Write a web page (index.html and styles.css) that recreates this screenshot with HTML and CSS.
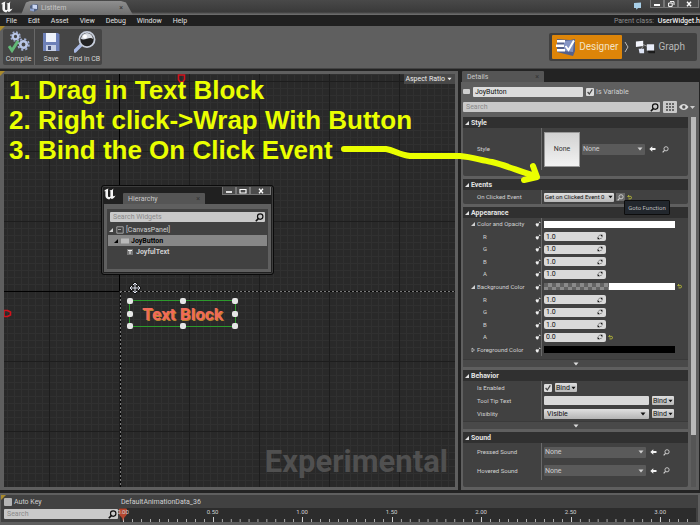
FILE: index.html
```
<!DOCTYPE html>
<html lang="en">
<head>
<meta charset="utf-8">
<title>ListItem</title>
<link rel="stylesheet" href="styles.css">
</head>
<body>
<svg class="defs" aria-hidden="true">
  <symbol id="logo" viewBox="0 0 12 12"><path fill="#f4f4f4" d="M0 3.500C1 2 2.500 1 4.500 .6C4 1.200 4 2 4 3v5c0 .8.8 1.200 1.800 1l.6-.6V3.200L5.500 2.500C7 2.500 8.500 1.500 9.500.5L9 2v5.600c0 .6.5.8 1 .6l1.500-.8C10.500 9.500 9 10.600 7.600 11l-.8-.9-1.600 1.300C3 11 1.500 10 1.400 8V3.400C1.200 2.800.6 3 0 3.500z"/></symbol>
  <symbol id="mag" viewBox="0 0 9 9"><circle cx="5.200" cy="3.600" r="2.700" fill="none" stroke="currentColor" stroke-width="1.200"/><path d="M3.300 5.600L.8 8.200" stroke="currentColor" stroke-width="1.600"/></symbol>
  <symbol id="tri" viewBox="0 0 6 6"><path d="M5 1v4H1z" fill="currentColor"/></symbol>
  <symbol id="triR" viewBox="0 0 6 6"><path d="M2 1l2.500 2L2 5z" fill="none" stroke="currentColor" stroke-width=".7"/></symbol>
  <symbol id="down" viewBox="0 0 6 4"><path d="M.5.5h5L3 3.600z" fill="currentColor"/></symbol>
  <symbol id="key" viewBox="0 0 6 6"><path d="M.5 3L2 2l2 1.500L3 5.600 1.400 5.200z" fill="#f0f0f0"/><path d="M3.200 2.800L5 1M4.400.6l1 1" stroke="#f0f0f0" stroke-width=".8"/></symbol>
  <symbol id="spin" viewBox="0 0 6 6"><path d="M3 .8h2.400v2.400zM.6 2.800v2.400H3z" fill="#111"/><path d="M1.500 2.200l1-.9M3.600 4.800l1-1" stroke="#111" stroke-width=".8"/></symbol>
  <symbol id="left" viewBox="0 0 7 6"><path d="M.3 3L3.300.3v1.700h3.200v2H3.300v1.700z" fill="#f2f2f2"/></symbol>
  <symbol id="undo" viewBox="0 0 5 5"><path d="M1 1.300h2.200a1.200 1.200 0 0 1 0 2.600H1.500M1.900.2L.7 1.300l1.200 1.200" fill="none" stroke="#c9cc3a" stroke-width=".8"/></symbol>
  <symbol id="check" viewBox="0 0 8 8"><path d="M1.600 4l1.700 2 3-4.600" fill="none" stroke="#444" stroke-width="1.200"/></symbol>
  <symbol id="gear" viewBox="0 0 12 12"><circle cx="6" cy="6" r="3" fill="none" stroke="#b9c6e6" stroke-width="2.400"/><circle cx="6" cy="6" r="5" fill="none" stroke="#a4b2d6" stroke-width="1.600" stroke-dasharray="2 1.930"/></symbol>
</svg>

<div class="app">
  <header class="titlebar">
    <svg class="logo"><use href="#logo"/></svg>
    <div class="doctab">
      <svg class="docicon" viewBox="0 0 8 8"><path d="M0 2l3-2 5 .5v5L4 8 0 6z" fill="#51607f"/><path d="M2.500.6l4.500.4v4l-4.500-.4z" fill="#c9d6f4"/><path d="M0 4.500l4 .5v2.600L0 6.500z" fill="#8fa3d0"/></svg>
      <span>ListItem</span><span class="x">×</span>
    </div>
    <div class="wintools">
      <svg class="bubble" viewBox="0 0 9 8"><path d="M1 1l7-.5v5.500L5 6 3.500 7.800 3 6 1 6z" fill="#a8cfe8"/></svg>
      <button class="wb" aria-label="Minimize"><svg viewBox="0 0 8 6"><path d="M1 4h6" stroke="#fff" stroke-width="2"/></svg></button>
      <button class="wb" aria-label="Restore"><svg viewBox="0 0 8 6"><path d="M3 .6h4v3.400M1.600 2h3.600v3.400H1.600z" fill="none" stroke="#fff" stroke-width="1"/></svg></button>
      <button class="wb wide" aria-label="Close"><svg viewBox="0 0 8 6"><path d="M2 .8l4 4.400M6 .8L2 5.200" stroke="#fff" stroke-width="1.400"/></svg></button>
    </div>
  </header>

  <nav class="menubar">
    <a href="#">File</a><a href="#">Edit</a><a href="#">Asset</a><a href="#">View</a><a href="#">Debug</a><a href="#">Window</a><a href="#">Help</a>
    <span class="parent">Parent class: <b>UserWidget.h</b></span>
  </nav>

  <div class="toolbar corner">
    <div class="tools">
      <button class="tool first">
        <svg viewBox="0 0 22 22"><use href="#gear" x="2" y="0" width="11" height="11"/><use href="#gear" x="9" y="7" width="13" height="13"/><path d="M1 15l3 4.500L10 10" fill="none" stroke="#63b877" stroke-width="3"/></svg>
        <span>Compile</span></button>
      <button class="tool">
        <svg viewBox="0 0 22 22"><path d="M3 2h15l1.500 1.500V20H3z" fill="#6d80b8"/><path d="M6 2h10v9H6z" fill="#eef2fb"/><path d="M6 14h10v6H6z" fill="#c6cfe6"/><path d="M8 15h3v4H8z" fill="#44527c"/></svg>
        <span>Save</span></button>
      <button class="tool last">
        <svg viewBox="0 0 22 22"><path d="M1 20l6-6" stroke="#a9b9e4" stroke-width="3.400" stroke-linecap="round"/><circle cx="13" cy="8.500" r="7.600" fill="#222" stroke="#c6cdda" stroke-width="1.800"/><path d="M7 8a6 6 0 0 1 12 0C16 5 11 10 7 8z" fill="#d7dbe2"/><circle cx="11" cy="5.500" r="2" fill="#fff"/></svg>
        <span>Find in CB</span></button>
    </div>
    <div class="modes">
      <button class="mode on"><svg viewBox="0 0 20 18"><path d="M1 1l13 1 5-1v12l-2 5L1 14z" fill="#55618c"/><path d="M8 3l10-1-1 12-9-1z" fill="#8494c4"/><path d="M1 2h8v2.500H1zM0 6.500h8V9H0zM1 11h8v2.500H1z" fill="#fff"/><path d="M9.500 8l3 4L18 2.500" fill="none" stroke="#fff" stroke-width="2"/></svg>Designer</button>
      <svg class="chev" viewBox="0 0 5 12"><path d="M1 1l3 5-3 5" fill="none" stroke="#bbb" stroke-width="1"/></svg>
      <button class="mode"><svg viewBox="0 0 22 16"><path d="M8 5l5 2M7 10l2-3" stroke="#aaa" stroke-width="1"/><path d="M1 2l8-1v6L1 8z" fill="#f3f5fc"/><path d="M4 10h6v5H5z" fill="#dfe5f6"/><path d="M13 5h8v7h-8z" fill="#e8ecf8"/><path d="M14 12h8v3h-7z" fill="#1c1c1c"/></svg>Graph</button>
    </div>
  </div>

  <main class="main">
    <section class="frame corner">
      <div class="canvas">
        <div class="axisx"></div><div class="axisy"></div>
        <div class="bounds"></div>
        <svg class="pin pintop" viewBox="0 0 9 9"><path d="M1.500 1h6v4.500L6 8H3L1.500 5.500z" fill="none" stroke="#d3121c" stroke-width="1.600"/></svg>
        <svg class="pin pinleft" viewBox="0 0 9 9"><path d="M1 1.500h3.500L7.500 3v3L4.500 7.500H1z" fill="none" stroke="#d3121c" stroke-width="1.600"/></svg>
        <div class="notes"><p>1. Drag in Text Block</p><p>2. Right click-&gt;Wrap With Button</p><p>3. Bind the On Click Event</p></div>
        <button class="aspect">Aspect Ratio <svg><use href="#down"/></svg></button>
        <svg class="move" viewBox="0 0 12 12"><path d="M6 1v10M1 6h10M4 3l2-2 2 2M4 9l2 2 2-2M3 4L1 6l2 2M9 4l2 2-2 2" fill="none" stroke="#111" stroke-width="2.400"/><path d="M6 1v10M1 6h10M4 3l2-2 2 2M4 9l2 2 2-2M3 4L1 6l2 2M9 4l2 2-2 2" fill="none" stroke="#e2e6f2" stroke-width="1"/></svg>
        <div class="widget">Text Block
          <i class="h nw"></i><i class="h n"></i><i class="h ne"></i><i class="h w"></i><i class="h e"></i><i class="h sw"></i><i class="h s"></i><i class="h se"></i>
        </div>
        <div class="experimental">Experimental</div>

        <div class="float">
          <div class="fhead">
            <svg class="logo"><use href="#logo"/></svg>
            <div class="tab ftab"><span>Hierarchy</span><span class="x">×</span></div>
            <div class="fbtns">
              <button class="wb" aria-label="Minimize"><svg viewBox="0 0 8 6"><path d="M1 4h6" stroke="#fff" stroke-width="1.600"/></svg></button>
              <button class="wb" aria-label="Maximize"><svg viewBox="0 0 8 6"><path d="M1 1.500h6v3.500H1z" fill="none" stroke="#fff" stroke-width="1.200"/></svg></button>
              <button class="wb wide" aria-label="Close"><svg viewBox="0 0 8 6"><path d="M2 .8l4 4.400M6 .8L2 5.200" stroke="#fff" stroke-width="1.300"/></svg></button>
            </div>
          </div>
          <div class="fbody">
            <div class="search"><input type="text" placeholder="Search Widgets" aria-label="Search Widgets"><svg><use href="#mag"/></svg></div>
            <ul class="tree">
              <li><svg class="t"><use href="#tri"/></svg><svg class="ic" viewBox="0 0 8 8"><path d="M.8.8h6.400v6.400H.8zM2 3.500h3" fill="none" stroke="#bbb" stroke-width=".8"/></svg>[CanvasPanel]</li>
              <li class="sel"><svg class="t"><use href="#tri"/></svg><svg class="ic" viewBox="0 0 8 8"><path d="M0 1.500h8v5H0z" fill="#b9b9b9"/></svg>JoyButton</li>
              <li class="leaf"><svg class="ic" viewBox="0 0 8 8"><path d="M1 1h6v6H1z" fill="#777"/><path d="M2 2.500h4M4 2.500v3.500" stroke="#eee" stroke-width="1"/></svg>JoyfulText</li>
            </ul>
          </div>
        </div>
      </div>
    </section>

    <aside class="side">
      <div class="tabs"><div class="tab"><span>Details</span><span class="x">×</span></div></div>
      <div class="details">
        <div class="namerow">
          <i class="chip"></i><input class="name" type="text" value="JoyButton" aria-label="Name">
          <label class="isvar"><span class="cb"><input type="checkbox" checked><svg><use href="#check"/></svg></span>Is Variable</label>
        </div>
        <div class="findrow">
          <div class="search"><input type="text" placeholder="Search" aria-label="Search details"><svg><use href="#mag"/></svg></div>
          <button class="gridbtn" aria-label="Property matrix"><svg viewBox="0 0 8 8"><path d="M0 0h2v2H0zM3 0h2v2H3zM6 0h2v2H6zM0 3h2v2H0zM3 3h2v2H3zM6 3h2v2H6zM0 6h2v2H0zM3 6h2v2H3zM6 6h2v2H6z" fill="#666"/></svg></button>
          <button class="eye" aria-label="View options"><svg viewBox="0 0 16 8"><path d="M0 4c2.500-4 7-4 9.500 0C7 8 2.500 8 0 4z" fill="#ddd"/><circle cx="4.800" cy="4" r="1.700" fill="#555"/><path d="M11 3h5l-2.500 3z" fill="#ccc"/></svg></button>
        </div>
        <div class="scroller">
          <div class="sections">
            <section class="sec style">
              <h2><svg><use href="#tri"/></svg>Style</h2>
              <div class="rows">
                <div class="row"><div class="lab"><label for="st">Style</label></div><div class="val"><div class="thumb">None</div><div class="pick"><select id="st"><option>None</option></select><svg><use href="#down"/></svg></div><svg class="arr"><use href="#left"/></svg><svg class="mg"><use href="#mag"/></svg></div></div>
              </div>
            </section>
            <section class="sec events">
              <h2><svg><use href="#tri"/></svg>Events</h2>
              <div class="rows">
                <div class="row"><div class="lab">On Clicked Event</div><div class="val"><button class="light get"><span>Get on Clicked Event 0</span><svg><use href="#down"/></svg></button><button class="goto" aria-label="Goto Function"><svg><use href="#mag"/></svg></button><svg class="un"><use href="#undo"/></svg><div class="tip" role="tooltip">Goto Function</div></div></div>
              </div>
            </section>
            <section class="sec appearance">
              <h2><svg><use href="#tri"/></svg>Appearance</h2>
              <div class="rows">
                <div class="row"><div class="lab top"><svg><use href="#tri"/></svg>Color and Opacity<svg class="k"><use href="#key"/></svg></div><div class="val"><div class="swatch white"></div></div></div>
                <div class="row"><div class="lab sub"><label for="c1">R</label><svg class="k"><use href="#key"/></svg></div><div class="val"><div class="num"><input id="c1" type="text" value="1.0"><svg><use href="#spin"/></svg></div></div></div>
                <div class="row"><div class="lab sub"><label for="c2">G</label><svg class="k"><use href="#key"/></svg></div><div class="val"><div class="num"><input id="c2" type="text" value="1.0"><svg><use href="#spin"/></svg></div></div></div>
                <div class="row"><div class="lab sub"><label for="c3">B</label><svg class="k"><use href="#key"/></svg></div><div class="val"><div class="num"><input id="c3" type="text" value="1.0"><svg><use href="#spin"/></svg></div></div></div>
                <div class="row"><div class="lab sub"><label for="c4">A</label><svg class="k"><use href="#key"/></svg></div><div class="val"><div class="num"><input id="c4" type="text" value="1.0"><svg><use href="#spin"/></svg></div></div></div>
                <div class="row"><div class="lab top"><svg><use href="#tri"/></svg>Background Color<svg class="k"><use href="#key"/></svg></div><div class="val"><div class="swatch half"></div><svg class="un"><use href="#undo"/></svg></div></div>
                <div class="row"><div class="lab sub"><label for="b1">R</label><svg class="k"><use href="#key"/></svg></div><div class="val"><div class="num"><input id="b1" type="text" value="1.0"><svg><use href="#spin"/></svg></div></div></div>
                <div class="row"><div class="lab sub"><label for="b2">G</label><svg class="k"><use href="#key"/></svg></div><div class="val"><div class="num"><input id="b2" type="text" value="1.0"><svg><use href="#spin"/></svg></div></div></div>
                <div class="row"><div class="lab sub"><label for="b3">B</label><svg class="k"><use href="#key"/></svg></div><div class="val"><div class="num"><input id="b3" type="text" value="1.0"><svg><use href="#spin"/></svg></div></div></div>
                <div class="row"><div class="lab sub"><label for="b4">A</label><svg class="k"><use href="#key"/></svg></div><div class="val"><div class="num"><input id="b4" type="text" value="0.0"><svg><use href="#spin"/></svg></div><svg class="un"><use href="#undo"/></svg></div></div>
                <div class="row"><div class="lab top"><svg><use href="#triR"/></svg>Foreground Color<svg class="k"><use href="#key"/></svg></div><div class="val"><div class="swatch black"></div></div></div>
              </div>
              <button class="more" aria-label="Show advanced"><svg><use href="#down"/></svg></button>
            </section>
            <section class="sec behavior">
              <h2><svg><use href="#tri"/></svg>Behavior</h2>
              <div class="rows">
                <div class="row"><div class="lab"><label for="en">Is Enabled</label></div><div class="val"><span class="cb"><input id="en" type="checkbox" checked><svg><use href="#check"/></svg></span><button class="light">Bind<svg><use href="#down"/></svg></button></div></div>
                <div class="row"><div class="lab"><label for="tt">Tool Tip Text</label></div><div class="val"><input class="long" id="tt" type="text"><button class="light">Bind<svg><use href="#down"/></svg></button></div></div>
                <div class="row"><div class="lab"><label for="vi">Visiblity</label></div><div class="val"><div class="long vis"><select id="vi"><option>Visible</option></select><svg><use href="#down"/></svg></div><button class="light">Bind<svg><use href="#down"/></svg></button></div></div>
              </div>
              <button class="more" aria-label="Show advanced"><svg><use href="#down"/></svg></button>
            </section>
            <section class="sec sound">
              <h2><svg><use href="#tri"/></svg>Sound</h2>
              <div class="rows">
                <div class="row"><div class="lab"><label for="ps">Pressed Sound</label></div><div class="val"><div class="pick big"><select id="ps"><option>None</option></select><svg><use href="#down"/></svg></div><svg class="arr"><use href="#left"/></svg><svg class="mg"><use href="#mag"/></svg></div></div>
                <div class="row"><div class="lab"><label for="hs">Hovered Sound</label></div><div class="val"><div class="pick big"><select id="hs"><option>None</option></select><svg><use href="#down"/></svg></div><svg class="arr"><use href="#left"/></svg><svg class="mg"><use href="#mag"/></svg></div></div>
              </div>
            </section>
          </div>
          <div class="bar"><i></i></div>
        </div>
      </div>
    </aside>
  </main>

  <footer class="timeline corner">
    <div class="tl">
      <label class="auto"><span class="cb"><input type="checkbox"></span>Auto Key</label>
      <div class="search"><input type="text" placeholder="Search" aria-label="Search tracks"><svg><use href="#mag"/></svg></div>
    </div>
    <div class="tr">
      <div class="anim">DefaultAnimationData_36</div>
      <div class="ruler">
        <svg class="playhead" viewBox="0 0 8 12"><path d="M.5.5h7v5.500L4 10 .5 6zM4 9v3" fill="#b5472f" stroke="#b5472f" stroke-width="1"/></svg>
        <div class="seg"><span>0.00</span></div><div class="seg"><span>0.50</span></div><div class="seg"><span>1.00</span></div><div class="seg"><span>1.50</span></div><div class="seg"><span>2.00</span></div><div class="seg"><span>2.50</span></div><div class="seg part"><span>3.00</span></div>
      </div>
    </div>
  </footer>
</div>

<svg class="scribble" viewBox="0 0 210 50" aria-hidden="true"><path d="M4 9h42c8 1 13 6 24 7h50c12 1 20 4 32 6 16 4 26 9 43 14M184 40l13-3-4-11" fill="none" stroke="#eaff00" stroke-width="6" stroke-linecap="round" stroke-linejoin="round"/></svg>
</body>
</html>
```

FILE: styles.css
```
* { box-sizing: border-box; margin: 0; padding: 0; }
body { background: #232323; font: 7px/8px Roboto, "Liberation Sans", sans-serif; color: #d0d0d0; overflow: hidden; }
button, input, select { font: inherit; color: inherit; border: 0; background: none; appearance: none; min-width: 0; outline: 0; }
a { color: inherit; text-decoration: none; }
svg { display: block; flex: none; }
.defs { position: absolute; width: 0; height: 0; }
.app { height: 100vh; display: flex; flex-direction: column; position: relative; }
.corner { position: relative; }
.corner::before { content: ""; position: absolute; left: 0; top: 0; z-index: 1; border-top: 5px solid #a98a2c; border-right: 5px solid transparent; }
.logo { width: 12px; height: 12px; }
.x { color: #333; margin-left: auto; }

.titlebar { flex: none; height: 15px; display: flex; align-items: flex-end; background: linear-gradient(#494949, #3a3a3a 80%, #6b6b6b 95%); }
.titlebar > .logo { margin: 0 8px 2px 1px; }
.doctab { width: 112px; height: 14px; display: flex; align-items: center; gap: 3px; padding: 0 10px 0 9px; color: #c6c6c6; background: linear-gradient(#8f8f8f, #6e6e6e); clip-path: polygon(0 100%, 5px 10%, 9px 0, 100px 0, 105px 10%, 112px 100%); }
.docicon { width: 8px; height: 8px; }
.wintools { margin-left: auto; align-self: flex-start; display: flex; padding-right: 1px; }
.bubble { width: 9px; height: 8px; margin: 2px 8px 0 0; }
.wb { width: 14px; height: 8px; display: grid; place-items: center; background: #4b4b4b; border: 1px solid #777; border-top: 0; }
.wb svg { width: 8px; height: 6px; }
.wb.wide { width: 21px; }

.menubar { flex: none; height: 11px; display: flex; align-items: center; gap: 11px; padding-left: 6px; background: #202020; color: #e0e0e0; }
.parent { margin-left: auto; color: #8e8e8e; white-space: nowrap; }
.parent b { font-weight: 500; color: #eee; margin-left: 2px; }

.toolbar { flex: none; height: 43px; display: flex; justify-content: space-between; align-items: center; background: #5f5f5f; padding: 0 3px; border-bottom: 1px solid #444; }
.tools { display: flex; height: 36px; background: #454545; border-radius: 2px; }
.tool { width: 32px; display: flex; flex-direction: column; align-items: center; gap: 2px; padding-top: 2px; color: #d4d4d4; }
.tool > svg { width: 22px; height: 22px; }
.tool.first { border-right: 1px solid #686868; }
.tool.last { width: 35px; white-space: nowrap; }
.modes { display: flex; align-items: center; height: 28px; padding: 2px 8px 2px 3px; background: #404040; border-radius: 2px; }
.mode { height: 24px; display: flex; align-items: center; gap: 3px; padding: 0 4px; font-size: 10px; color: #b8b8b8; }
.mode svg { width: 20px; height: 18px; }
.mode.on { background: #dd8509; color: #f3e2c4; border-radius: 1px; }
.chev { width: 5px; height: 12px; margin: 0 2px; }

.main { flex: 1; min-height: 0; display: grid; grid-template-columns: minmax(0, 1fr) 239px; gap: 3px; padding: 2px 0 3px; }
.frame { background: #5f5f5f; padding: 3px 3px 3px 4px; }
.canvas { position: relative; height: 100%; overflow: hidden; background-color: #292929;
  background-image: linear-gradient(90deg, #1d1d1d 1px, transparent 1px), linear-gradient(#1d1d1d 1px, transparent 1px), linear-gradient(90deg, #303030 1px, transparent 1px), linear-gradient(#303030 1px, transparent 1px);
  background-size: 70px 70px, 70px 70px, 7px 7px, 7px 7px; background-position: 45px 7px, 45px 7px, 3px 0, 3px 0; }
.notes { position: absolute; left: 5px; top: 1px; font: bold 26px/30px "Liberation Sans", sans-serif; color: #eaff00; white-space: nowrap; }
.aspect { position: absolute; right: 0; top: 0; height: 10px; display: flex; align-items: center; gap: 2px; padding: 0 3px 0 1px; background: #484848; color: #eee; }
.aspect svg { width: 5px; height: 4px; }
.pin { position: absolute; width: 9px; height: 9px; }
.pintop { left: 173px; top: 0; }
.pinleft { left: -1px; top: 235px; }
.axisx { position: absolute; left: 0; top: 217px; width: 115px; height: 1px; background: #000; }
.axisy { position: absolute; left: 115px; top: 0; width: 1px; height: 217px; background: #000; }
.bounds { position: absolute; left: 116px; top: 217px; right: 0; bottom: 0; background: repeating-linear-gradient(90deg, #777 0 2px, #050505 2px 4px) 0 0 / 100% 1px no-repeat, repeating-linear-gradient(#777 0 2px, #050505 2px 4px) 0 0 / 1px 100% no-repeat; }
.move { position: absolute; left: 125px; top: 208px; width: 12px; height: 12px; }
.widget { position: absolute; left: 125px; top: 226px; width: 107px; height: 27px; border: 1px solid #2c9a2c; display: grid; place-items: center; font: bold 17px/20px Roboto, sans-serif; color: #f26a5a; text-shadow: 1px 1px 0 #b9822e; }
.h { position: absolute; width: 6px; height: 6px; border-radius: 2px; background: #e6e6e6; transform: translate(-50%, -50%); }
.nw, .w, .sw { left: 0; } .n, .s { left: 50%; } .ne, .e, .se { left: 100%; }
.nw, .n, .ne { top: 0; } .w, .e { top: 50%; } .sw, .s, .se { top: 100%; }
.experimental { position: absolute; right: 7px; bottom: 7px; font: bold 31px/36px Roboto, sans-serif; color: #505050; }

.float { position: absolute; left: 97px; top: 111px; width: 173px; height: 90px; display: flex; flex-direction: column; padding: 1px 2px 2px; background: #202020; border: 1px solid #0a0a0a; border-radius: 3px; box-shadow: inset 0 0 0 1px #3d3d3d; }
.fhead { flex: none; height: 17px; display: flex; align-items: flex-end; gap: 7px; }
.fhead .logo { margin: 0 0 4px; }
.tab { width: 82px; height: 11px; display: flex; align-items: center; padding: 0 5px; background: #555; color: #c8c8c8; border-radius: 1px 1px 0 0; }
.fbtns { align-self: flex-start; margin-left: auto; display: flex; }
.fbody { flex: 1; border: 3px solid #5f5f5f; border-top-width: 5px; background: #414141; padding: 3px 1px 0; }
.fbody .search { margin: 0 2px; }
.search { display: flex; align-items: center; height: 10px; padding: 0 1px 0 3px; background: #c9c9c9; color: #111; border-radius: 1px; }
.search input { flex: 1; height: 10px; }
.search svg { width: 9px; height: 9px; }
::placeholder { color: #8a8a8a; opacity: 1; }
.tree { list-style: none; margin-top: 2px; }
.tree li { height: 11px; display: flex; align-items: center; gap: 2px; }
.tree .t { width: 6px; height: 6px; }
.tree .ic { width: 8px; height: 8px; }
.tree .sel { background: #878787; color: #000; font-weight: bold; padding-left: 5px; }
.tree .leaf { padding-left: 18px; font-weight: bold; }

.side { min-width: 0; min-height: 0; display: flex; flex-direction: column; padding-right: 1px; }
.tabs { flex: none; padding-left: 1px; }
.details { flex: 1; min-height: 0; display: flex; flex-direction: column; background: #5f5f5f; padding: 4px 3px 3px 2px; }
.namerow { display: flex; align-items: center; height: 11px; margin-bottom: 4px; }
.chip { width: 7px; height: 5px; background: #cfcfcf; border-radius: 1px; margin-right: 3px; }
.name { width: 110px; height: 10px; padding: 0 2px; background: #dcdcdc; color: #111; border-radius: 1px; }
.isvar { display: flex; align-items: center; gap: 2px; margin-left: 3px; }
.cb { position: relative; width: 8px; height: 8px; }
.cb input { display: block; width: 8px; height: 8px; background: #dadada; border-radius: 1px; }
.cb svg { position: absolute; inset: 0; width: 8px; height: 8px; pointer-events: none; }
.findrow { display: flex; align-items: center; height: 12px; margin-bottom: 4px; }
.findrow .search { width: 197px; }
.gridbtn { width: 14px; height: 12px; margin-left: 3px; display: grid; place-items: center; background: #c9c9c9; border-radius: 1px; }
.gridbtn svg { width: 8px; height: 8px; }
.eye { margin-left: 2px; }
.eye svg { width: 16px; height: 8px; }
.scroller { flex: 1; min-height: 0; display: flex; gap: 3px; }
.sections { flex: 1; min-width: 0; display: flex; flex-direction: column; gap: 3px; }
.bar { width: 5px; background: #555; }
.bar i { display: block; height: 86%; background: #b9b9b9; }
.sec { display: flex; flex-direction: column; background: #414141; border-radius: 2px; font-size: 6px; flex: none; }
.sec h2 { flex: none; height: 11px; display: flex; align-items: center; gap: 1px; padding-left: 1px; background: #303030; font-size: 7px; font-weight: bold; color: #e4e4e4; }
.sec h2 svg, .lab svg { width: 6px; height: 6px; }
.rows { display: grid; grid-auto-rows: 1fr; }
.style .rows { height: 42px; margin-bottom: 6px; }
.events .rows { height: 14px; }
.appearance .rows { height: 138px; margin-bottom: 3px; }
.behavior .rows { height: 39px; margin-bottom: 1px; }
.sound .rows { height: 37px; margin-bottom: 7px; }
.row { display: flex; min-height: 0; }
.lab { flex: none; width: 79px; display: flex; align-items: center; padding-left: 14px; border-right: 1px solid #6a6a6a; color: #d2d2d2; }
.lab.top { padding-left: 7px; gap: 1px; }
.lab.sub { padding-left: 20px; }
.lab .k { margin-left: auto; }
.val { flex: 1; min-width: 0; display: flex; align-items: center; padding-left: 2px; position: relative; }
.thumb { width: 36px; height: 35px; display: grid; place-items: center; background: linear-gradient(#d2d2d2, #f2f2f2); color: #333; font-size: 7px; border: 1px solid #999; }
.pick { width: 63px; height: 11px; margin-left: 2px; display: flex; align-items: center; background: #5a5a5a; color: #d0d0d0; padding: 0 2px 0 1px; border-radius: 1px; font-size: 7px; }
.pick.big { width: 102px; margin-left: 0; }
.pick select, .vis select { flex: 1; }
.pick svg, .vis svg, .light svg, .more svg { width: 6px; height: 4px; }
.arr { width: 7px; height: 6px; margin: 0 6px 0 4px; }
.mg { width: 7px; height: 7px; }
.light { height: 9px; display: flex; align-items: center; gap: 1px; padding: 0 2px; background: linear-gradient(#dedede, #b8b8b8); color: #111; border-radius: 1px; white-space: nowrap; }
.light svg { width: 5px; }
.get { width: 70px; padding: 0 1px; }
.get span { flex: 1; text-align: left; overflow: hidden; }
.goto { margin-left: 2px; width: 9px; height: 8px; background: #686868; display: grid; place-items: center; }
.goto svg { width: 7px; height: 7px; }
.un { width: 5px; height: 5px; margin-left: 2px; }
.tip { position: absolute; z-index: 2; left: 82px; top: 10px; width: 46px; height: 15px; display: grid; place-items: center; background: #22272d; border: 1px solid #0d0d0d; border-radius: 1px; color: #bcbcbc; white-space: nowrap; }
.swatch { width: 131px; height: 7px; }
.white { background: #fff; }
.black { background: #000; }
.half { background: linear-gradient(90deg, transparent 50%, #fff 50%), repeating-conic-gradient(#8a8a8a 0 25%, #636363 0 50%) 0 0 / 8px 8px; }
.num { width: 62px; height: 9px; display: flex; align-items: center; background: #d9d9d9; color: #111; border-radius: 2px; padding: 0 3px 0 2px; font-size: 7px; }
.num input { flex: 1; height: 9px; }
.num svg { width: 6px; height: 6px; }
.more { height: 8px; display: grid; place-items: center; background: #494949; border-top: 1px solid #3a3a3a; color: #ddd; }
.behavior .val { gap: 3px; }
.behavior .light { font-size: 7px; padding: 0 1px; }
.long { width: 105px; height: 9px; background: #d9d9d9; color: #111; border-radius: 1px; }
.vis { display: flex; align-items: center; padding: 0 3px; background: linear-gradient(#e0e0e0, #b4b4b4); height: 10px; font-size: 7px; }

.timeline { flex: none; height: 32px; display: flex; background: #414141; border: 1px solid #5f5f5f; border-width: 2px 2px 3px 1px; padding: 1px 2px 0 3px; }
.tl { flex: none; width: 114px; }
.auto { display: flex; align-items: center; gap: 2px; height: 10px; margin: 1px 0 2px; }
.timeline .cb input { background: #b5b5b5; }
.tr { flex: 1; min-width: 0; display: flex; flex-direction: column; margin-left: 2px; }
.anim { height: 12px; line-height: 13px; padding-left: 1px; }
.ruler { flex: 1; position: relative; display: grid; grid-template-columns: repeat(6, minmax(0, 10fr)) minmax(0, 4fr); padding-left: 3px; background: #2c2c2c; font-size: 6px; }
.seg { background: linear-gradient(#ccc, #ccc) 0 100% / 1px 5px no-repeat, linear-gradient(90deg, #aaa 1px, transparent 1px) 0 100% / 10% 3px repeat-x; }
.seg.part { background: linear-gradient(#ccc, #ccc) 0 100% / 1px 5px no-repeat, linear-gradient(90deg, #aaa 1px, transparent 1px) 0 100% / 25% 3px repeat-x; }
.seg span { display: block; width: 12px; margin-left: -6px; text-align: center; position: relative; }
.playhead { position: absolute; left: -1px; top: 0; width: 8px; height: 13px; }

.scribble { position: absolute; left: 340px; top: 140px; width: 210px; height: 50px; pointer-events: none; }
```
